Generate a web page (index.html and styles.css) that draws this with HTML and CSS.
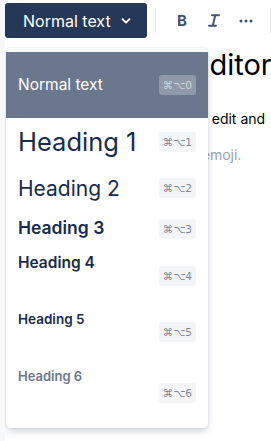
FILE: index.html
```html
<!DOCTYPE html>
<html lang="en">
<head>
<meta charset="utf-8">
<link rel="stylesheet" href="styles.css">
</head>
<body>
<div class="page">
  <div class="toolbar">
    <button class="style-btn">
      <span>Normal text</span>
      <svg class="chev" width="10" height="6" viewBox="0 0 10 6"><path d="M1.5 1.2 L5 4.6 L8.5 1.2" fill="none" stroke="#fff" stroke-width="1.8" stroke-linecap="round" stroke-linejoin="round"/></svg>
    </button>
    <span class="sep"></span>
    <span class="tool tool-b">B</span>
    <span class="tool">
      <svg width="12" height="13" viewBox="0 0 12 13"><path d="M4 1.2 H11 M1 11.8 H8 M7.3 1.2 L4.7 11.8" fill="none" stroke="#42526e" stroke-width="1.9" stroke-linecap="round"/></svg>
    </span>
    <span class="tool">
      <svg width="14" height="4" viewBox="0 0 14 4"><circle cx="2" cy="2" r="1.5" fill="#42526e"/><circle cx="7" cy="2" r="1.5" fill="#42526e"/><circle cx="12" cy="2" r="1.5" fill="#42526e"/></svg>
    </span>
    <span class="sep sep2"></span>
  </div>
  <div class="content">
    <h1 class="title">Editor</h1>
    <p class="line">Type, edit and</p>
    <p class="line placeholder">Add emoji.</p>
  </div>

  <div class="menu">
    <div class="item active">
      <span class="label normal">Normal text</span>
      <span class="kbd">⌘⌥0</span>
    </div>
    <div class="item i1">
      <span class="label h1">Heading 1</span>
      <span class="kbd">⌘⌥1</span>
    </div>
    <div class="item i2">
      <span class="label h2">Heading 2</span>
      <span class="kbd">⌘⌥2</span>
    </div>
    <div class="item i3">
      <span class="label h3">Heading 3</span>
      <span class="kbd">⌘⌥3</span>
    </div>
    <div class="item i4">
      <span class="label h4">Heading 4</span>
      <span class="kbd">⌘⌥4</span>
    </div>
    <div class="item i5">
      <span class="label h5">Heading 5</span>
      <span class="kbd">⌘⌥5</span>
    </div>
    <div class="item i6">
      <span class="label h6">Heading 6</span>
      <span class="kbd">⌘⌥6</span>
    </div>
  </div>
</div>
</body>
</html>
```

FILE: styles.css
```css
* { box-sizing: border-box; }
html, body { margin: 0; padding: 0; }
body {
  background: #f7f8f9;
  font-family: Inter, "Noto Sans", "DejaVu Sans", sans-serif;
  width: 271px;
  height: 441px;
  overflow: hidden;
}
.page {
  position: relative;
  margin-left: 5px;
  height: 441px;
  background: #fff;
  overflow: hidden;
}
.toolbar {
  display: flex;
  align-items: center;
  height: 41px;
  padding-top: 3px;
  padding-bottom: 3px;
}
.style-btn {
  display: flex;
  align-items: center;
  width: 142px;
  height: 35px;
  border: none;
  border-radius: 3px;
  background: #253858;
  color: #fff;
  font-family: inherit;
  font-size: 16px;
  padding: 0 0 0 18px;
  cursor: pointer;
}
.style-btn .chev { margin-left: 10px; margin-top: 1px; }
.sep {
  width: 1px;
  height: 25px;
  background: #ebecf0;
  margin-left: 8px;
  margin-right: 10px;
}
.sep2 { margin-left: 8px; margin-right: 0; }
.tool {
  width: 32px;
  height: 32px;
  display: flex;
  align-items: center;
  justify-content: center;
  color: #42526e;
}
.tool-b {
  font-weight: 700;
  font-size: 15px;
}
.content {
  padding-left: 166px;
  white-space: nowrap;
  color: #172b4d;
}
.title {
  margin: 6px 0 0 0;
  padding-left: 21px;
  font-size: 29px;
  font-weight: 400;
  line-height: 36px;
  color: #000;
}
.line {
  margin: 26px 0 0 0;
  font-size: 14px;
  line-height: 20px;
  color: #000;
}
.placeholder {
  margin-top: 16px;
  color: #97a0af;
}

.menu {
  position: absolute;
  left: 1px;
  top: 48px;
  width: 202px;
  height: 380px;
  background: #fff;
  border-radius: 4px;
  padding: 4px 0;
  box-shadow: 0 4px 8px -2px rgba(9, 30, 66, 0.25), 0 0 1px rgba(9, 30, 66, 0.31);
}
.item {
  display: flex;
  justify-content: space-between;
  align-items: flex-start;
  padding: 0 12px;
  color: #172b4d;
}
.label { line-height: 1.2; }
.kbd {
  display: inline-flex;
  align-items: center;
  height: 20px;
  padding: 0 4px;
  border-radius: 3px;
  background: #f4f5f7;
  color: #7a869a;
  font-family: "DejaVu Sans", sans-serif;
  font-size: 10.5px;
}
.item.active {
  height: 66px;
  align-items: center;
  background: #6b778c;
  color: #fff;
}
.item.active .kbd {
  background: rgba(255, 255, 255, 0.25);
  color: rgba(255, 255, 255, 0.6);
}
.normal { font-size: 15.5px; }
.i1 { height: 53px; }
.i1 .label { margin-top: 9px; }
.i1 .kbd { margin-top: 14px; }
.h1 { font-size: 25.5px; font-weight: 400; }
.i2 { height: 42px; }
.i2 .label { margin-top: 5px; }
.i2 .kbd { margin-top: 7px; }
.h2 { font-size: 21px; font-weight: 400; }
.i3 { height: 37px; }
.i3 .label { margin-top: 4px; }
.i3 .kbd { margin-top: 6px; }
.h3 { font-size: 17.5px; font-weight: 600; }
.i4 { height: 55px; }
.i4 .label { margin-top: 4px; }
.i4 .kbd { margin-top: 16px; }
.h4 { font-size: 15.5px; font-weight: 600; }
.i5 { height: 57px; }
.i5 .label { margin-top: 6px; }
.i5 .kbd { margin-top: 17px; }
.h5 { font-size: 13.5px; font-weight: 600; }
.i6 { height: 62px; }
.i6 .label { margin-top: 7px; }
.i6 .kbd { margin-top: 21px; }
.h6 { font-size: 13px; font-weight: 600; color: #6b778c; }
```
